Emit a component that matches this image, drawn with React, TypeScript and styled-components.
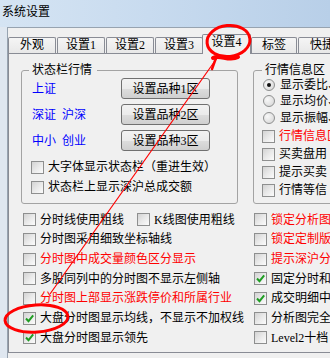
import React from 'react';
import styled, { createGlobalStyle } from 'styled-components';

const GlobalStyle = createGlobalStyle`
  * { box-sizing: border-box; }
  html, body { margin: 0; padding: 0; background: #f0f0f0; }
  #root { width: 330px; height: 358px; overflow: hidden; }
`;

type Tone = 'red' | 'blue' | undefined;

const toneColor = (t: Tone) => (t === 'red' ? '#ff0000' : t === 'blue' ? '#0000ff' : '#000');

const Window = styled.div`
  position: relative;
  width: 330px;
  height: 358px;
  overflow: hidden;
  display: flex;
  flex-direction: column;
  background: #dfe7f0;
  font-family: "Liberation Serif", "Noto Sans CJK SC", serif;
  font-size: 12px;
  line-height: 14px;
  color: #000;
`;

const TitleBar = styled.div`
  flex: none;
  height: 27px;
  padding: 5px 0 0 2px;
  background: linear-gradient(90deg, #d5e4f3 0%, #c8dbef 45%, #b8cfe8 100%);
`;

const Client = styled.div`
  flex: 1;
  margin-left: 7px;
  padding-top: 6px;
  border-top: 1px solid #97a3b0;
  border-left: 1px solid #97a3b0;
  background: #f0f0f0;
  display: flex;
  flex-direction: column;
`;

const TabStrip = styled.div`
  display: flex;
  align-items: flex-end;
  gap: 1px;
  height: 19px;
  flex: none;
  position: relative;
  z-index: 1;
`;

const Tab = styled.div<{ $w: number; $active?: boolean }>`
  flex: none;
  width: ${(p) => p.$w}px;
  height: ${(p) => (p.$active ? 20 : 16)}px;
  margin: ${(p) => (p.$active ? '0 -1px -1px -2px' : '0')};
  border: 1px solid #898c95;
  border-bottom: none;
  border-radius: 2px 2px 0 0;
  background: ${(p) => (p.$active ? '#f0f0f0' : 'linear-gradient(#f5f5f5, #e8e8e8)')};
  text-align: center;
  white-space: nowrap;
`;

const Panel = styled.div`
  flex: none;
  height: 300px;
  border: 1px solid #898c95;
  border-right: none;
  padding-top: 9px;
`;

const TopRow = styled.div`
  display: flex;
  gap: 15px;
  margin-left: 12px;
`;

const Group = styled.fieldset<{ $w: number; $pad: number }>`
  flex: none;
  margin: 0;
  min-width: 0;
  width: ${(p) => p.$w}px;
  height: 141px;
  padding: 0 0 0 ${(p) => p.$pad}px;
  border: 1px solid #a3a3a3;
  border-radius: 3px;
`;

const Legend = styled.legend<{ $shift: number }>`
  padding: 0 5px 0 3px;
  margin-left: ${(p) => p.$shift}px;
  line-height: 14px;
`;

const QuoteList = styled.div`
  display: flex;
  flex-direction: column;
  gap: 5px;
  margin-top: 1px;
`;

const QuoteRow = styled.div`
  display: flex;
  align-items: center;
  height: 21px;
`;

const QuoteLabel = styled.span`
  width: 89px;
  color: #0000ff;
  white-space: pre;
`;

const SetButton = styled.button`
  width: 89px;
  height: 21px;
  padding: 0;
  border: 1px solid #707070;
  border-radius: 3px;
  background: linear-gradient(#f2f2f2 0%, #ebebeb 50%, #dddddd 51%, #cfcfcf 100%);
  font: inherit;
  color: #000;
`;

const GroupChecks = styled.div`
  margin: 6px 0 0 -1px;
`;

const Line = styled.div<{ $h: number; $tone?: Tone }>`
  display: flex;
  align-items: center;
  gap: 4px;
  height: ${(p) => p.$h}px;
  white-space: nowrap;
  color: ${(p) => toneColor(p.$tone)};
`;

const RadioList = styled.div`
  margin-bottom: 1.5px;
`;

const InfoChecks = styled.div`
  margin-left: -1px;
`;

const Box = styled.span`
  flex: none;
  width: 13px;
  height: 13px;
  border: 1px solid #8e8f8f;
  background: linear-gradient(135deg, #d3d3d3 0%, #ebebeb 55%, #fbfbfb 100%);
  display: flex;
  align-items: center;
  justify-content: center;
`;

const Radio = styled.span<{ $on?: boolean }>`
  flex: none;
  width: 12px;
  height: 12px;
  margin-right: 1px;
  border-radius: 50%;
  border: 1px solid #8e8f8f;
  background: radial-gradient(circle at 35% 35%, #f8f8f8 0%, #e2e2e2 60%, #d0d0d0 100%);
  display: flex;
  align-items: center;
  justify-content: center;
  &::after {
    content: '';
    width: 4px;
    height: 4px;
    border-radius: 50%;
    background: #111;
    display: ${(p) => (p.$on ? 'block' : 'none')};
  }
`;

const Grid = styled.div`
  display: grid;
  grid-template-columns: 231px 1fr;
  grid-auto-rows: 19.67px;
  margin: 6px 0 0 14px;
`;

const Pair = styled.div`
  display: flex;
  align-items: center;
`;

const PairItem = styled.div`
  width: 114px;
`;

const Marks = styled.svg`
  position: absolute;
  left: 0;
  top: 0;
  width: 330px;
  height: 358px;
  pointer-events: none;
  z-index: 5;
`;

const Check: React.FC<{ label: string; on?: boolean; tone?: Tone; h?: number }> = ({ label, on, tone, h = 19.67 }) => (
  <Line $h={h} $tone={tone}>
    <Box>
      {on && (
        <svg width="11" height="11" viewBox="0 0 11 11">
          <path d="M2 5.5 L4.5 8.2 L9.2 2.4" fill="none" stroke="#1f9d23" strokeWidth="2" />
        </svg>
      )}
    </Box>
    <span>{label}</span>
  </Line>
);

const tabs = [
  { label: '外观', w: 48 },
  { label: '设置1', w: 48 },
  { label: '设置2', w: 48 },
  { label: '设置3', w: 48 },
  { label: '设置4', w: 49, active: true },
  { label: '标签', w: 46 },
  { label: '快捷', w: 48 },
];

const quotes = [
  { label: '上证', btn: '设置品种1区' },
  { label: '深证  沪深', btn: '设置品种2区' },
  { label: '中小  创业', btn: '设置品种3区' },
];

const radios = [
  { label: '显示委比、', on: true },
  { label: '显示均价、' },
  { label: '显示振幅、' },
];

const infoChecks: { label: string; tone?: Tone }[] = [
  { label: '行情信息区', tone: 'red' },
  { label: '买卖盘用' },
  { label: '提示买卖' },
  { label: '行情等信' },
];

const leftRows: { label: string; on?: boolean; tone?: Tone }[] = [
  { label: '分时线使用粗线' },
  { label: '分时图采用细致坐标轴线' },
  { label: '分时图中成交量颜色区分显示', tone: 'red' },
  { label: '多股同列中的分时图不显示左侧轴' },
  { label: '分时图上部显示涨跌停价和所属行业', tone: 'red' },
  { label: '大盘分时图显示均线，不显示不加权线', on: true },
  { label: '大盘分时图显示领先', on: true },
];

const rightRows: { label: string; on?: boolean; tone?: Tone }[] = [
  { label: '锁定分析图', tone: 'red' },
  { label: '锁定定制版', tone: 'red' },
  { label: '提示深沪分', tone: 'red' },
  { label: '固定分时和', on: true },
  { label: '成交明细中', on: true },
  { label: '分析图完全' },
  { label: 'Level2十档' },
];

export default function App() {
  return (
    <>
      <GlobalStyle />
      <Window>
        <TitleBar>系统设置</TitleBar>
        <Client>
          <TabStrip>
            {tabs.map((t) => (
              <Tab key={t.label} $w={t.w} $active={t.active}>
                {t.label}
              </Tab>
            ))}
          </TabStrip>
          <Panel>
            <TopRow>
              <Group $w={217} $pad={10}>
                <Legend $shift={-3}>状态栏行情</Legend>
                <QuoteList>
                  {quotes.map((q) => (
                    <QuoteRow key={q.btn}>
                      <QuoteLabel>{q.label}</QuoteLabel>
                      <SetButton>{q.btn}</SetButton>
                    </QuoteRow>
                  ))}
                </QuoteList>
                <GroupChecks>
                  <Check label="大字体显示状态栏（重进生效）" h={20} />
                  <Check label="状态栏上显示深沪总成交额" h={20} />
                </GroupChecks>
              </Group>
              <Group $w={130} $pad={9}>
                <Legend $shift={-1}>行情信息区</Legend>
                <RadioList>
                  {radios.map((r) => (
                    <Line key={r.label} $h={16.25}>
                      <Radio $on={r.on} />
                      <span>{r.label}</span>
                    </Line>
                  ))}
                </RadioList>
                <InfoChecks>
                  {infoChecks.map((c) => (
                    <Check key={c.label} label={c.label} tone={c.tone} h={18} />
                  ))}
                </InfoChecks>
              </Group>
            </TopRow>
            <Grid>
              {leftRows.map((row, i) => (
                <React.Fragment key={row.label}>
                  {i === 0 ? (
                    <Pair>
                      <PairItem>
                        <Check label={row.label} />
                      </PairItem>
                      <Check label="K线图使用粗线" />
                    </Pair>
                  ) : (
                    <Check label={row.label} on={row.on} tone={row.tone} />
                  )}
                  <Check label={rightRows[i].label} on={rightRows[i].on} tone={rightRows[i].tone} />
                </React.Fragment>
              ))}
            </Grid>
          </Panel>
        </Client>
        <Marks viewBox="0 0 330 358">
          <ellipse cx="228.5" cy="41" rx="21.5" ry="15.5" fill="none" stroke="#ff0000" strokeWidth="3" transform="rotate(-6 228.5 41)" />
          <line x1="50" y1="294" x2="217" y2="58" stroke="#ff0000" strokeWidth="1.2" />
          <path d="M213 58 C220 54, 229 62, 238 57" fill="none" stroke="#ff0000" strokeWidth="4" strokeLinecap="round" />
          <path d="M216 58 L212 69" fill="none" stroke="#ff0000" strokeWidth="2.5" strokeLinecap="round" />
          <ellipse cx="36.5" cy="318.5" rx="31.5" ry="13.5" fill="none" stroke="#ff0000" strokeWidth="3" transform="rotate(-4 36.5 318.5)" />
        </Marks>
      </Window>
    </>
  );
}
